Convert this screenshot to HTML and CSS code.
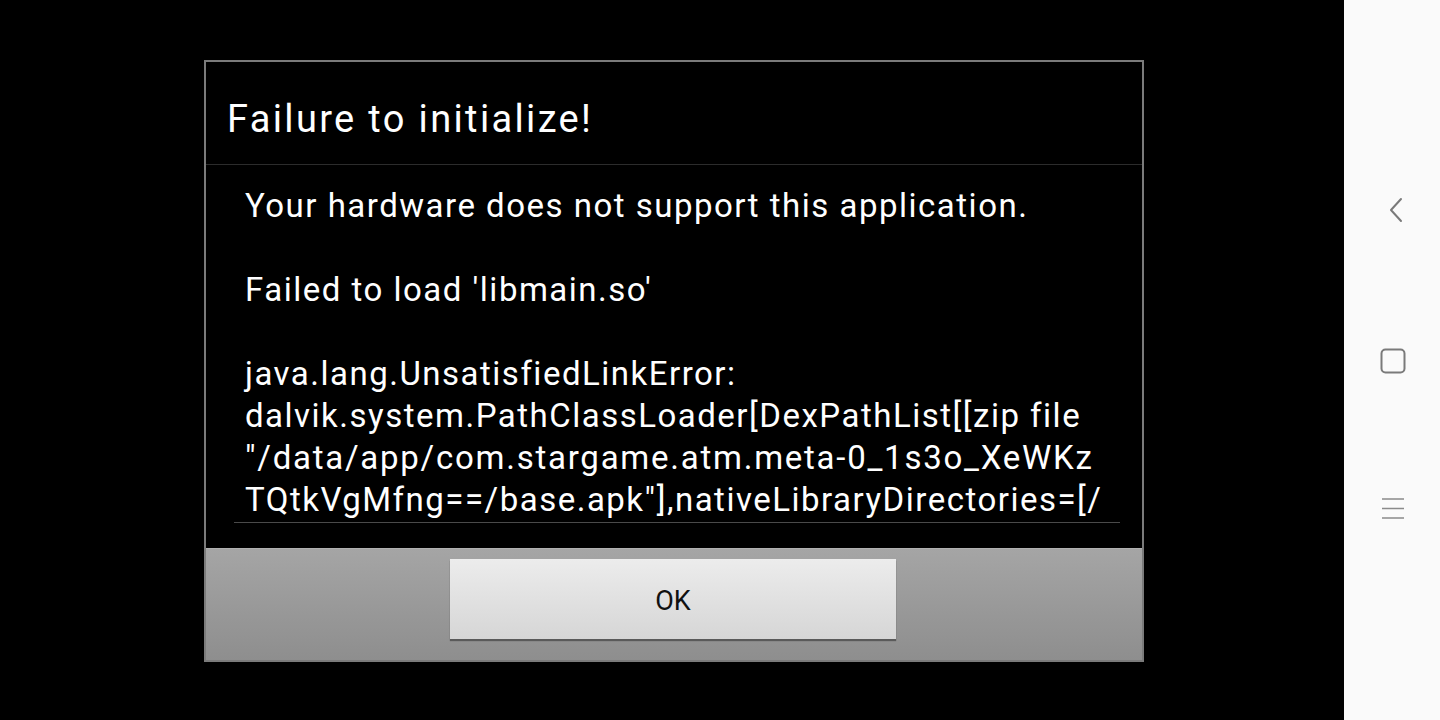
FILE: index.html
```html
<!DOCTYPE html>
<html>
<head>
<meta charset="utf-8">
<link rel="stylesheet" href="styles.css">
</head>
<body>
<div class="screen">
  <div class="stage">
    <div class="dialog">
      <div class="title">Failure to initialize!</div>
      <div class="content">
        <div class="scroll">
          <div class="line">Your hardware does not support this application.</div>
          <div class="line blank">&nbsp;</div>
          <div class="line">Failed to load 'libmain.so'</div>
          <div class="line blank">&nbsp;</div>
          <div class="line">java.lang.UnsatisfiedLinkError:</div>
          <div class="line">dalvik.system.PathClassLoader[DexPathList[[zip file</div>
          <div class="line wide">"/data/app/com.stargame.atm.meta-0_1s3o_XeWKz</div>
          <div class="line">TQtkVgMfng==/base.apk"],nativeLibraryDirectories=[/</div>
        </div>
        <div class="rule"></div>
      </div>
      <div class="buttons">
        <div class="ok">OK</div>
      </div>
    </div>
  </div>
  <div class="nav">
    <svg class="ico" width="26" height="30" viewBox="0 0 26 30"><path d="M21 4 L11 15 L21 26" fill="none" stroke="#7a7a7a" stroke-width="2" stroke-linecap="round" stroke-linejoin="round"/></svg>
    <svg class="ico" width="26" height="26" viewBox="0 0 26 26"><rect x="1.5" y="1.5" width="23" height="23" rx="4" fill="none" stroke="#7a7a7a" stroke-width="2"/></svg>
    <svg class="ico" width="26" height="24" viewBox="0 0 26 24"><path d="M2 2 H24 M2 11.5 H24 M2 21 H24" fill="none" stroke="#8a8a8a" stroke-width="1.6"/></svg>
  </div>
</div>
</body>
</html>
```
FILE: styles.css
```css
html, body {
  margin: 0;
  padding: 0;
  background: #000;
}
.screen {
  display: flex;
  width: 1440px;
  height: 720px;
  overflow: hidden;
  font-family: Roboto, "Noto Sans", sans-serif;
}
.stage {
  width: 1344px;
  height: 720px;
  background: #000;
  padding: 60px 0 0 204px;
  box-sizing: border-box;
}
.dialog {
  width: 940px;
  height: 602px;
  box-sizing: border-box;
  border: 2px solid #7b7b7b;
  background: #000;
  display: flex;
  flex-direction: column;
}
.title {
  height: 103px;
  box-sizing: border-box;
  border-bottom: 1px solid #2c2c2c;
  color: #fff;
  font-size: 38px;
  letter-spacing: 2.35px;
  padding-left: 21px;
  padding-top: 12px;
  line-height: 90px;
}
.content {
  height: 383px;
  display: flex;
  flex-direction: column;
}
.scroll {
  height: 357px;
  overflow: hidden;
  padding: 20px 0 0 39px;
  box-sizing: border-box;
}
.line {
  color: #fff;
  font-size: 33px;
  letter-spacing: 1.5px;
  line-height: 42px;
  height: 42px;
  white-space: nowrap;
}
.line.wide {
  letter-spacing: 1.75px;
}
.rule {
  height: 1px;
  background: #4a4a4a;
  margin: 0 22px 0 28px;
}
.buttons {
  flex: 1;
  background: linear-gradient(#a5a5a5, #8e8e8e);
  border-top: 1px solid #b0b0b0;
  display: flex;
  justify-content: center;
  padding: 10px 2px 0 0;
  box-sizing: border-box;
}
.ok {
  width: 446px;
  height: 80px;
  background: linear-gradient(#ececec, #d6d6d6);
  box-shadow: 0 2px 1px #5a5a5a;
  color: #111;
  font-size: 27px;
  line-height: 84px;
  text-align: center;
}
.nav {
  width: 96px;
  height: 720px;
  background: #fafafa;
  display: flex;
  flex-direction: column;
  align-items: center;
  padding: 195px 0 0 2px;
  box-sizing: border-box;
  gap: 123px;
}
.ico {
  display: block;
}
```
